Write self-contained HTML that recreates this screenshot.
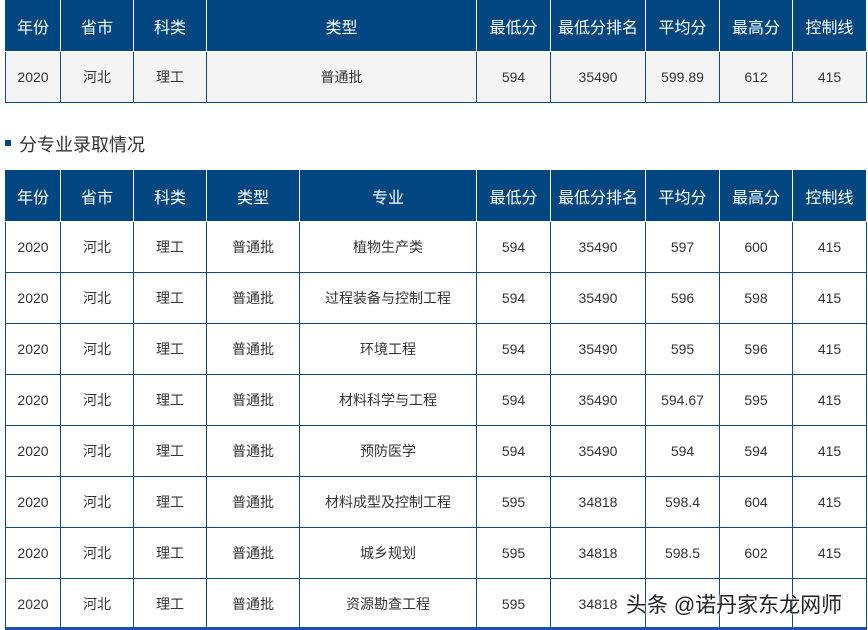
<!DOCTYPE html>
<html><head><meta charset="utf-8"><style>
body{margin:0;width:868px;height:630px;background:#fff;position:relative;overflow:hidden;font-family:"Liberation Sans","Noto Sans CJK SC",sans-serif;}
table{position:absolute;left:5px;border-collapse:collapse;table-layout:fixed;width:861px;}
th{background:#004782;color:#fff;font-size:16px;font-weight:normal;height:51px;border:1px solid #fff;border-top:none;padding:0;}
th:first-child{border-left:1px solid #004782}
td{border:1px solid #0a4a85;height:50px;text-align:center;font-size:14px;color:#333;padding:0;}
.t1 td{background:#f4f4f4}
.title{position:absolute;left:5px;top:131px;font-size:18px;color:#333;}
.title i{display:inline-block;width:6px;height:6px;background:#004782;margin-right:8px;vertical-align:middle;position:relative;top:-3px}
.wm{position:absolute;left:626px;top:589px;font-size:21px;color:#222;text-shadow:0 0 2px #fff,0 0 2px #fff;}
.bl{position:absolute;left:5px;top:627px;width:861px;height:3px;background:#1f4fb0}
</style></head><body>
<table class="t1" style="top:0">
<colgroup><col style="width:55px"><col style="width:73px"><col style="width:73px"><col style="width:270px"><col style="width:74px"><col style="width:95px"><col style="width:74px"><col style="width:73px"><col style="width:74px"></colgroup>
<tr><th>年份</th><th>省市</th><th>科类</th><th>类型</th><th>最低分</th><th>最低分排名</th><th>平均分</th><th>最高分</th><th>控制线</th></tr>
<tr><td>2020</td><td>河北</td><td>理工</td><td>普通批</td><td>594</td><td>35490</td><td>599.89</td><td>612</td><td>415</td></tr>
</table>
<div class="title"><i></i>分专业录取情况</div>
<table style="top:170px">
<colgroup><col style="width:55px"><col style="width:73px"><col style="width:73px"><col style="width:93px"><col style="width:177px"><col style="width:74px"><col style="width:95px"><col style="width:74px"><col style="width:73px"><col style="width:74px"></colgroup>
<tr><th>年份</th><th>省市</th><th>科类</th><th>类型</th><th>专业</th><th>最低分</th><th>最低分排名</th><th>平均分</th><th>最高分</th><th>控制线</th></tr>
<tr><td>2020</td><td>河北</td><td>理工</td><td>普通批</td><td>植物生产类</td><td>594</td><td>35490</td><td>597</td><td>600</td><td>415</td></tr>
<tr><td>2020</td><td>河北</td><td>理工</td><td>普通批</td><td>过程装备与控制工程</td><td>594</td><td>35490</td><td>596</td><td>598</td><td>415</td></tr>
<tr><td>2020</td><td>河北</td><td>理工</td><td>普通批</td><td>环境工程</td><td>594</td><td>35490</td><td>595</td><td>596</td><td>415</td></tr>
<tr><td>2020</td><td>河北</td><td>理工</td><td>普通批</td><td>材料科学与工程</td><td>594</td><td>35490</td><td>594.67</td><td>595</td><td>415</td></tr>
<tr><td>2020</td><td>河北</td><td>理工</td><td>普通批</td><td>预防医学</td><td>594</td><td>35490</td><td>594</td><td>594</td><td>415</td></tr>
<tr><td>2020</td><td>河北</td><td>理工</td><td>普通批</td><td>材料成型及控制工程</td><td>595</td><td>34818</td><td>598.4</td><td>604</td><td>415</td></tr>
<tr><td>2020</td><td>河北</td><td>理工</td><td>普通批</td><td>城乡规划</td><td>595</td><td>34818</td><td>598.5</td><td>602</td><td>415</td></tr>
<tr><td>2020</td><td>河北</td><td>理工</td><td>普通批</td><td>资源勘查工程</td><td>595</td><td>34818</td><td></td><td></td><td></td></tr>
</table>
<div class="bl"></div>
<div class="wm">头条 @诺丹家东龙网师</div>
</body></html>
